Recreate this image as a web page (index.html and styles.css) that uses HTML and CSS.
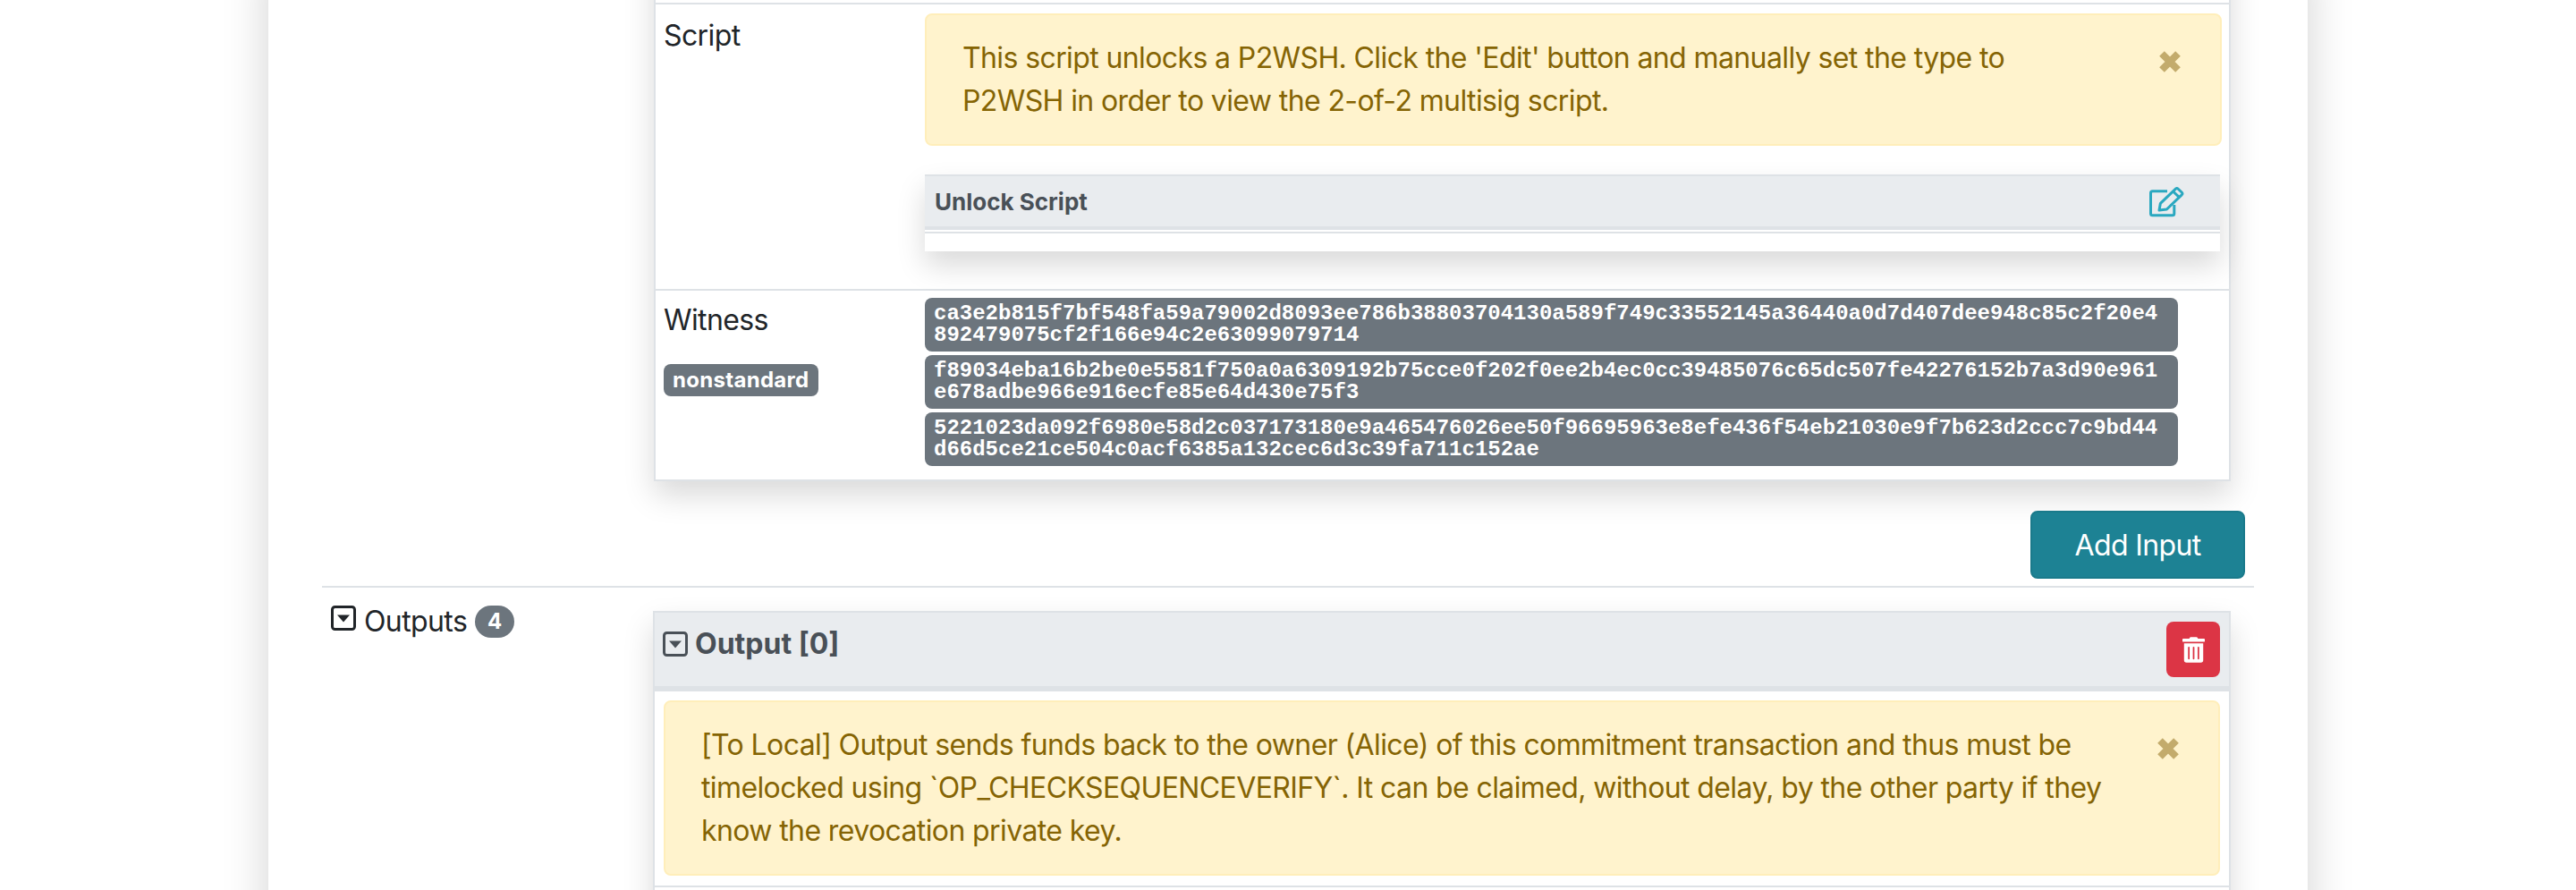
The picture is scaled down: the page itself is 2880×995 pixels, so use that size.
FILE: index.html
```html
<!DOCTYPE html>
<html lang="en">
<head>
<meta charset="utf-8">
<title>Transaction</title>
<link rel="stylesheet" href="styles.css">
</head>
<body>
<main class="sheet">
  <section class="card input-card">
    <div class="stub"></div>
    <div class="row script-row">
      <div class="label">Script</div>
      <div class="value">
        <div class="alert">
          This script unlocks a P2WSH. Click the 'Edit' button and manually set the type to P2WSH in order to view the 2-of-2 multisig script.
          <svg class="close" viewBox="0 0 24 24" aria-hidden="true"><path d="M3 3 21 21M21 3 3 21"/></svg>
        </div>
        <div class="script-box">
          <div class="script-head">
            <span class="script-title">Unlock Script</span>
            <svg class="edit" viewBox="0 0 39 35" aria-hidden="true"><path d="M20 5.8H3.5a2 2 0 0 0-2 2V30.8a2 2 0 0 0 2 2H25.8a2 2 0 0 0 2-2V21"/><path d="M11 27 12.4 19.3 29.4 3.2a2 2 0 0 1 2.8 0L36.2 7a2 2 0 0 1 0 2.8L19.4 26Z"/><path d="M26.5 6 33.5 12.6"/></svg>
          </div>
          <div class="script-body"></div>
        </div>
      </div>
    </div>
    <div class="row witness-row">
      <div class="label">
        <div>Witness</div>
        <span class="badge">nonstandard</span>
      </div>
      <div class="value chips">
        <code class="chip">ca3e2b815f7bf548fa59a79002d8093ee786b38803704130a589f749c33552145a36440a0d7d407dee948c85c2f20e4892479075cf2f166e94c2e63099079714</code>
        <code class="chip">f89034eba16b2be0e5581f750a0a6309192b75cce0f202f0ee2b4ec0cc39485076c65dc507fe42276152b7a3d90e961e678adbe966e916ecfe85e64d430e75f3</code>
        <code class="chip">5221023da092f6980e58d2c037173180e9a465476026ee50f96695963e8efe436f54eb21030e9f7b623d2ccc7c9bd44d66d5ce21ce504c0acf6385a132cec6d3c39fa711c152ae</code>
      </div>
    </div>
  </section>

  <div class="add-row"><button class="btn-add" type="button">Add Input</button></div>

  <section class="outputs">
    <div class="outputs-label">
      <svg class="caret caret-raised" viewBox="0 0 28 28" aria-hidden="true"><rect x="1.5" y="1.5" width="25" height="25" rx="3"/><path class="tri" d="M7 10.5H21L14 18.5Z"/></svg>
      <span>Outputs</span>
      <span class="pill">4</span>
    </div>
    <div class="card output-card">
      <div class="output-head">
        <div class="output-title">
          <svg class="caret" viewBox="0 0 28 28" aria-hidden="true"><rect x="1.5" y="1.5" width="25" height="25" rx="3"/><path class="tri" d="M7 10.5H21L14 18.5Z"/></svg>
          <span>Output [0]</span>
        </div>
        <button class="btn-del" type="button" aria-label="Delete">
          <svg class="trash" viewBox="0 0 448 512" aria-hidden="true"><path d="M32 464a48 48 0 0 0 48 48h288a48 48 0 0 0 48-48V128H32zm272-256a16 16 0 0 1 32 0v224a16 16 0 0 1-32 0zm-96 0a16 16 0 0 1 32 0v224a16 16 0 0 1-32 0zm-96 0a16 16 0 0 1 32 0v224a16 16 0 0 1-32 0zM432 32H312l-9.4-18.7A24 24 0 0 0 281.1 0H166.8a23.72 23.72 0 0 0-21.4 13.3L136 32H16A16 16 0 0 0 0 48v32a16 16 0 0 0 16 16h416a16 16 0 0 0 16-16V48a16 16 0 0 0-16-16z"/></svg>
        </button>
      </div>
      <div class="output-body">
        <div class="alert">
          [To Local] Output sends funds back to the owner (Alice) of this commitment transaction and thus must be timelocked using `OP_CHECKSEQUENCEVERIFY`. It can be claimed, without delay, by the other party if they know the revocation private key.
          <svg class="close" viewBox="0 0 24 24" aria-hidden="true"><path d="M3 3 21 21M21 3 3 21"/></svg>
        </div>
      </div>
      <div class="row next-row"></div>
    </div>
  </section>
</main>
</body>
</html>
```
FILE: styles.css
```css
html, body {
  margin: 0;
  height: 995px;
  overflow: hidden;
  background: #fff;
}
body {
  font-family: Inter, "Liberation Sans", sans-serif;
  font-size: 32px;
  line-height: 48px;
  letter-spacing: -0.019em;
  color: #212529;
}
.sheet {
  box-sizing: border-box;
  width: 2280px;
  height: 1200px;
  margin: -60px auto 0;
  padding: 0 60px;
  background: #fff;
  box-shadow: 0 16px 48px rgba(0, 0, 0, .18);
}
.card {
  background: #fff;
  border: 2px solid #dee2e6;
  box-shadow: 0 16px 32px rgba(0, 0, 0, .15);
}
.input-card {
  margin: 0 26px 0 371px;
}
.stub {
  height: 61px;
}
.row {
  display: flex;
  border-top: 2px solid #dee2e6;
  padding: 10px 8px 0 9px;
}
.label {
  flex: 0 0 292px;
}
.value {
  flex: 1;
  min-width: 0;
}
.script-row {
  box-sizing: border-box;
  height: 320px;
}
.script-row .label {
  padding-top: 1px;
}
.alert {
  position: relative;
  box-sizing: border-box;
  padding: 24px 128px 24px 40px;
  background: #fff3cd;
  border: 2px solid #ffeeba;
  border-radius: 8px;
  color: #856404;
}
.close {
  position: absolute;
  top: 40px;
  right: 44px;
  width: 24px;
  height: 24px;
  fill: none;
  stroke: #c3ab6c;
  stroke-width: 8;
}
.script-box {
  margin: 32px 2px 0 0;
  box-shadow: 0 16px 32px rgba(0, 0, 0, .15);
}
.script-head {
  display: flex;
  justify-content: space-between;
  align-items: center;
  box-sizing: border-box;
  height: 62px;
  padding: 0 40px 0 11px;
  background: #e9ecef;
  border-top: 2px solid #dee2e6;
  border-bottom: 4px solid #dee2e6;
}
.script-title {
  padding-top: 2px;
  font-size: 26px;
  font-weight: 700;
  line-height: 36px;
  letter-spacing: 0;
  color: #495057;
}
.edit {
  width: 39px;
  height: 35px;
  fill: none;
  stroke: #2aa8c0;
  stroke-width: 3;
  stroke-linejoin: round;
}
.script-body {
  height: 20px;
  margin-top: 2px;
  border-top: 2px solid #dee2e6;
}
.witness-row {
  padding-top: 8px;
  padding-bottom: 15px;
}
.witness-row .label {
  padding-top: 1px;
}
.badge {
  display: inline-block;
  margin-top: 25px;
  padding: 0 10px;
  height: 36px;
  background: #6c757d;
  border-radius: 8px;
  color: #fff;
  font-size: 24px;
  font-weight: 700;
  line-height: 36px;
  letter-spacing: 0.3px;
}
.chips {
  display: flex;
  flex-direction: column;
  gap: 4px;
}
.chip {
  box-sizing: border-box;
  display: block;
  width: 1401px;
  height: 60px;
  padding: 6px 10px;
  background: #6c757d;
  border-radius: 8px;
  color: #fff;
  font-family: "Liberation Mono", monospace;
  font-size: 24px;
  font-weight: 700;
  line-height: 24px;
  letter-spacing: 0;
  word-break: break-all;
}
.add-row {
  display: flex;
  justify-content: flex-end;
  margin-top: 33px;
  padding-right: 10px;
}
.btn-add {
  box-sizing: border-box;
  width: 240px;
  height: 76px;
  padding: 0;
  background: #1d8294;
  border: 2px solid #1a7a8b;
  border-radius: 8px;
  color: #fff;
  font-family: inherit;
  font-size: 32px;
  letter-spacing: -0.02em;
}
.outputs {
  display: flex;
  align-items: flex-start;
  margin-top: 8px;
  border-top: 2px solid #dee2e6;
}
.outputs-label {
  flex: 0 0 360px;
  display: flex;
  align-items: center;
  gap: 9px;
  margin: 20px 0 0 10px;
  height: 36px;
}
.caret {
  flex: none;
  width: 28px;
  height: 28px;
  fill: none;
  stroke: currentColor;
  stroke-width: 3;
}
.caret-raised {
  margin-bottom: 8px;
}
.tri {
  fill: currentColor;
  stroke: none;
}
.pill {
  width: 44px;
  height: 36px;
  border-radius: 18px;
  background: #6c757d;
  color: #fff;
  font-size: 24px;
  font-weight: 700;
  line-height: 36px;
  letter-spacing: 0;
  text-align: center;
}
.output-card {
  flex: 0 0 1764px;
  box-sizing: border-box;
  margin-top: 26px;
}
.output-head {
  display: flex;
  justify-content: space-between;
  align-items: center;
  padding: 10px 10px 10px 9px;
  background: #e9ecef;
  border-bottom: 6px solid #dee2e6;
}
.output-title {
  display: flex;
  align-items: center;
  gap: 8px;
  margin-top: -12px;
  font-weight: 700;
  letter-spacing: 0;
  color: #495057;
}
.btn-del {
  display: flex;
  align-items: center;
  justify-content: center;
  width: 60px;
  height: 62px;
  padding: 0;
  background: #dc3545;
  border: 0;
  border-radius: 8px;
}
.trash {
  width: 25px;
  height: 29px;
  fill: #fff;
}
.output-body {
  padding: 10px 10px 11px 10px;
}
.next-row {
  height: 120px;
}
```
